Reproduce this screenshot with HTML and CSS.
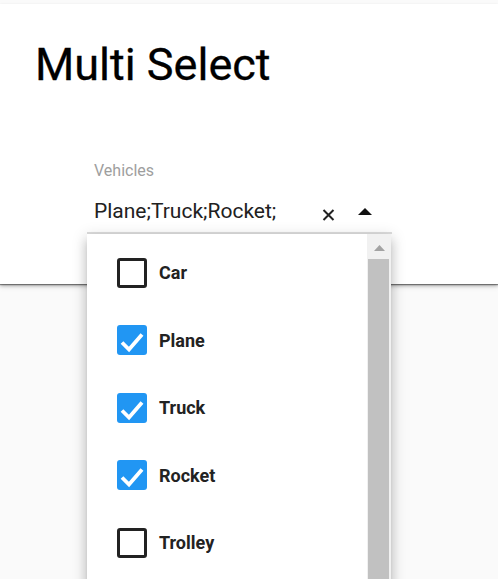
FILE: index.html
```html
<!DOCTYPE html>
<html>
<head>
<meta charset="utf-8">
<link rel="stylesheet" href="styles.css">
</head>
<body>
<div class="card">
  <h1 class="title">Multi Select</h1>
  <div class="field">
    <div class="label">Vehicles</div>
    <div class="control">
      <span class="value">Plane;Truck;Rocket;</span>
      <svg class="clear" width="13" height="12" viewBox="0 0 13 12"><path d="M1.5 1 L11.5 11 M11.5 1 L1.5 11" stroke="#222" stroke-width="2" fill="none"/></svg>
      <svg class="arrow" width="14" height="7" viewBox="0 0 14 7"><path d="M0 7 L7 0 L14 7 Z" fill="#111"/></svg>
    </div>
    <div class="menu">
      <div class="list">
        <div class="row"><span class="box"></span><span class="text">Car</span></div>
        <div class="row"><span class="box checked"><svg width="30" height="30" viewBox="0 0 30 30"><path d="M5 17.5 L12 24.5 L25 9.5" stroke="#fff" stroke-width="3.8" fill="none"/></svg></span><span class="text">Plane</span></div>
        <div class="row"><span class="box checked"><svg width="30" height="30" viewBox="0 0 30 30"><path d="M5 17.5 L12 24.5 L25 9.5" stroke="#fff" stroke-width="3.8" fill="none"/></svg></span><span class="text">Truck</span></div>
        <div class="row"><span class="box checked"><svg width="30" height="30" viewBox="0 0 30 30"><path d="M5 17.5 L12 24.5 L25 9.5" stroke="#fff" stroke-width="3.8" fill="none"/></svg></span><span class="text">Rocket</span></div>
        <div class="row"><span class="box"></span><span class="text">Trolley</span></div>
      </div>
      <div class="scrollbar">
        <div class="up"><svg width="11" height="6" viewBox="0 0 11 6"><path d="M0 6 L5.5 0 L11 6 Z" fill="#a3a3a3"/></svg></div>
        <div class="thumb"></div>
      </div>
    </div>
  </div>
</div>
</body>
</html>
```

FILE: styles.css
```css
html, body {
  margin: 0;
  padding: 0;
  background: #fafafa;
  overflow: hidden;
  height: 579px;
  font-family: Roboto, "Liberation Sans", sans-serif;
}

.card {
  margin-top: 4px;
  height: 280px;
  box-sizing: border-box;
  padding: 38px 0 0 35px;
  background: #fff;
  box-shadow: 0 1px 1px rgba(0,0,0,0.4), 0 2px 3px rgba(0,0,0,0.25), 0 3px 6px rgba(0,0,0,0.08);
  position: relative;
}

.title {
  margin: 0;
  font-size: 45px;
  line-height: 45px;
  font-weight: 400;
  color: #000;
  -webkit-text-stroke: 0.3px #000;
}

.field {
  position: relative;
  margin: 74px 0 0 52px;
  width: 305px;
}

.label {
  padding-left: 7px;
  font-size: 16px;
  line-height: 20px;
  color: #9e9e9e;
}

.control {
  margin-top: 17px;
  display: flex;
  align-items: flex-start;
  padding-bottom: 8px;
  border-bottom: 2px solid #ddd;
}

.value {
  flex: 1;
  padding-left: 7px;
  font-size: 21px;
  line-height: 26px;
  color: #212121;
}

.clear {
  margin-top: 11px;
  display: block;
}

.arrow {
  display: block;
  margin: 10px 20px 0 23px;
}

.menu {
  position: absolute;
  left: 0;
  top: 100%;
  width: 304px;
  height: 360px;
  background: #fff;
  display: flex;
  z-index: 2;
  box-shadow: 0 5px 5px -3px rgba(0,0,0,0.2), 0 8px 10px 1px rgba(0,0,0,0.14), 0 3px 14px 2px rgba(0,0,0,0.12);
}

.list {
  flex: 1;
  padding: 5px 0 0 30px;
}

.row {
  height: 67.5px;
  display: flex;
  align-items: center;
  gap: 12px;
}

.box {
  width: 30px;
  height: 30px;
  box-sizing: border-box;
  border: 3px solid #222;
  border-radius: 3px;
  display: block;
}

.box.checked {
  border: none;
  background: #2196f3;
}

.box svg {
  display: block;
}

.text {
  font-size: 18px;
  font-weight: 700;
  color: #222;
}

.scrollbar {
  width: 24px;
  background: #f1f1f1;
  display: flex;
  flex-direction: column;
}

.up {
  height: 25px;
  display: flex;
  justify-content: center;
  align-items: flex-start;
  padding-top: 11px;
  box-sizing: border-box;
}

.up svg {
  display: block;
}

.thumb {
  flex: 1;
  margin: 0 2px 0 1px;
  background: #c1c1c1;
}
```
